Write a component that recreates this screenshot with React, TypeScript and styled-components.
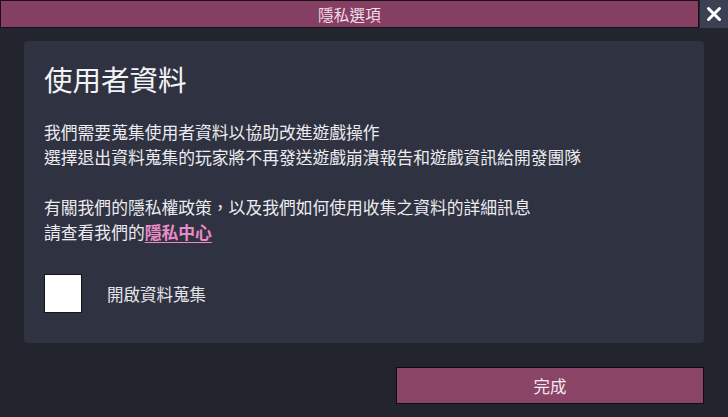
import React from "react";
import styled, { createGlobalStyle } from "styled-components";

const Global = createGlobalStyle`
  html, body { margin: 0; padding: 0; background: #22252e; }
  body { font-family: "Noto Sans CJK TC", "Noto Sans", sans-serif; }
  * { box-sizing: border-box; }
`;

const Page = styled.div`
  width: 728px;
  height: 417px;
  background: #22252e;
  display: flex;
  flex-direction: column;
`;

const Header = styled.div`
  display: flex;
  height: 28px;
`;

const TitleBar = styled.div`
  flex: 1;
  background: #853f62;
  border: 1px solid #1a1118;
  display: flex;
  align-items: center;
  justify-content: center;
  color: #f3dbe8;
  font-size: 15.5px;
  letter-spacing: 0.3px;
`;

const CloseButton = styled.div`
  width: 28px;
  margin-left: 1px;
  background: #3b4053;
  display: flex;
  align-items: center;
  justify-content: center;
`;

const Body = styled.div`
  padding: 13px 24px 0 24px;
`;

const Panel = styled.div`
  height: 302px;
  background: #2f3241;
  border-radius: 4px;
  padding: 18px 20px;
  color: #eeeef2;
`;

const Heading = styled.h1`
  margin: 0;
  font-weight: 400;
  font-size: 28.5px;
  line-height: 40px;
  color: #f4f4f6;
`;

const Paragraph = styled.p`
  margin: 0;
  font-size: 16.8px;
  line-height: 25px;
  color: #ececf0;
`;

const FirstParagraph = styled(Paragraph)`
  margin-top: 21px;
`;

const SecondParagraph = styled(Paragraph)`
  margin-top: 25px;
`;

const Link = styled.a`
  color: #e98bc4;
  font-weight: 700;
  text-decoration: underline;
  text-underline-offset: 3px;
`;

const CheckRow = styled.label`
  display: flex;
  align-items: center;
  margin-top: 29px;
  gap: 25px;
`;

const Box = styled.span`
  width: 38px;
  height: 39px;
  background: #ffffff;
  border: 1px solid #15161c;
`;

const CheckLabel = styled.span`
  font-size: 16.5px;
  color: #e6e6ea;
`;

const Footer = styled.div`
  display: flex;
  justify-content: flex-end;
  padding: 24px 24px 0 0;
`;

const DoneButton = styled.button`
  width: 308px;
  height: 37px;
  background: #8a4466;
  border: 1px solid #120c10;
  color: #f5e6ee;
  font-family: "Noto Sans CJK TC", "Noto Sans", sans-serif;
  font-size: 16.5px;
  padding: 0;
`;

export default function App() {
  return (
    <Page>
      <Global />
      <Header>
        <TitleBar>隱私選項</TitleBar>
        <CloseButton>
          <svg width="16" height="16" viewBox="0 0 16 16">
            <path d="M2.5 2.5 L13.5 13.5 M13.5 2.5 L2.5 13.5" stroke="#ffffff" strokeWidth="3" strokeLinecap="round" />
          </svg>
        </CloseButton>
      </Header>
      <Body>
        <Panel>
          <Heading>使用者資料</Heading>
          <FirstParagraph>
            我們需要蒐集使用者資料以協助改進遊戲操作
            <br />
            選擇退出資料蒐集的玩家將不再發送遊戲崩潰報告和遊戲資訊給開發團隊
          </FirstParagraph>
          <SecondParagraph>
            有關我們的隱私權政策，以及我們如何使用收集之資料的詳細訊息
            <br />
            請查看我們的<Link>隱私中心</Link>
          </SecondParagraph>
          <CheckRow>
            <Box />
            <CheckLabel>開啟資料蒐集</CheckLabel>
          </CheckRow>
        </Panel>
      </Body>
      <Footer>
        <DoneButton>完成</DoneButton>
      </Footer>
    </Page>
  );
}
